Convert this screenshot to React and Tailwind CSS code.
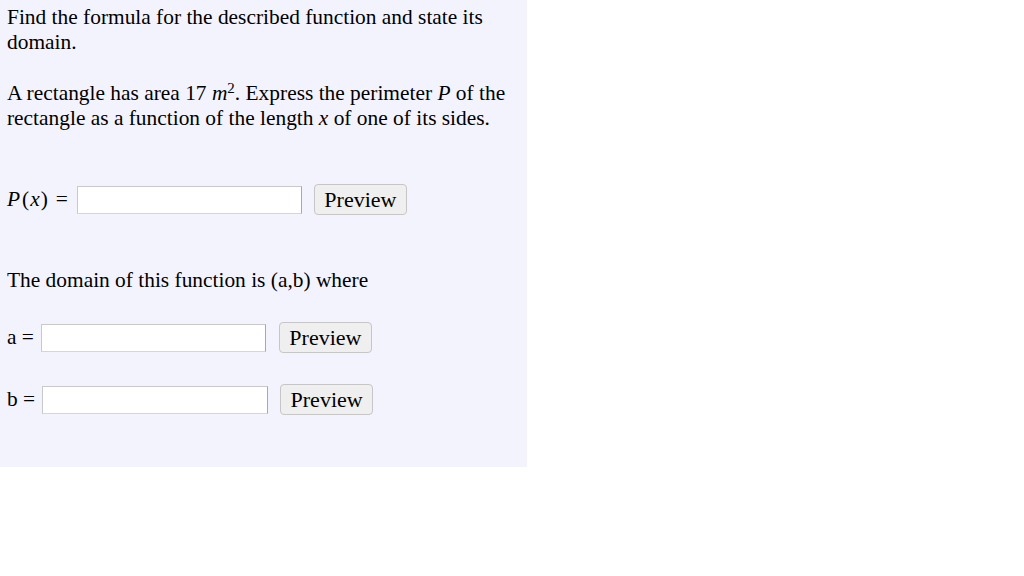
import React from 'react';

const serif = { fontFamily: '"Liberation Serif", "Times New Roman", serif' };

// Champ de saisie + bouton Preview
const AnswerRow = ({ label, inputClass, buttonClass }) => (
  <div className="flex items-center">
    <span className="whitespace-nowrap">{label}</span>
    <input
      type="text"
      className={`h-[28px] bg-white border border-[#c9c9c9] border-r-[#a9a9a9] border-b-[#d6d6d6] outline-none ${inputClass}`}
    />
    <button
      className={`h-[31px] rounded-[4px] border border-[#c6c6c6] bg-[#efefef] text-[22px] leading-none text-black ${buttonClass}`}
      style={serif}
    >
      Preview
    </button>
  </div>
);

export default function App() {
  return (
    <div className="w-[1024px] h-[576px] bg-white">
      <div
        className="w-[527px] h-[467px] bg-[#f3f3fe] pl-[7px] pr-[12px] pt-[5px] text-[21.4px] leading-[25px] text-black"
        style={serif}
      >
        <p>Find the formula for the described function and state its domain.</p>

        <p className="mt-[26px]">
          A rectangle has area 17 <i>m</i>
          <sup className="text-[15px] leading-none not-italic">2</sup>. Express the perimeter <i>P</i> of the
          rectangle as a function of the length <i>x</i> of one of its sides.
        </p>

        <div className="mt-[53px]">
          <AnswerRow
            label={
              <>
                <i className="mr-[2px]">P</i>(<i className="mx-[1px]">x</i>)
                <span className="ml-[8px]">=</span>
              </>
            }
            inputClass="ml-[9px] w-[225px]"
            buttonClass="ml-[12px] w-[93px]"
          />
        </div>

        <p className="mt-[53px]">The domain of this function is (a,b) where</p>

        <div className="mt-[29px]">
          <AnswerRow label="a =" inputClass="ml-[7px] w-[225px]" buttonClass="ml-[13px] w-[93px]" />
        </div>

        <div className="mt-[31px]">
          <AnswerRow label="b =" inputClass="ml-[7px] w-[226px]" buttonClass="ml-[12px] w-[93px]" />
        </div>
      </div>
    </div>
  );
}
